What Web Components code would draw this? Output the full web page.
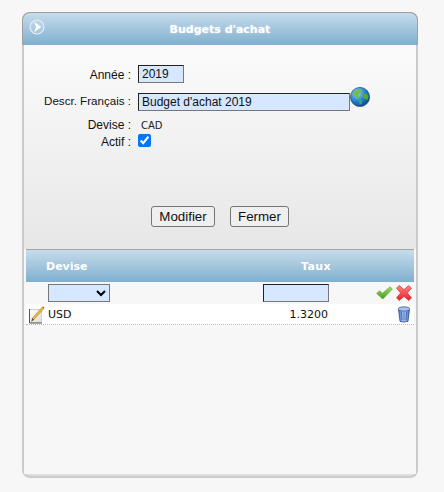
<!DOCTYPE html>
<html lang="fr">
<head>
<meta charset="utf-8">
<title>Budgets d'achat</title>
<style>
    html, body { margin: 0; padding: 0; background: #f7f7f7; }
    body { width: 444px; height: 492px; overflow: hidden; font-family: "Liberation Sans", Arial, sans-serif; }
</style>
</head>
<body>

<budget-panel heading="Budgets d'achat">
    <budget-form>
        <form-row label="Année :" top="20" shift="1"><text-box width="46" value="2019"></text-box></form-row>
        <form-row label="Descr. Français :" top="10" shift="-2" style="font-size:11.6px">
            <text-box width="212" value="Budget d'achat 2019"></text-box>
            <svg slot="after" width="22" height="22" viewBox="0 0 22 22">
                <defs>
                    <radialGradient id="sea" cx="0.35" cy="0.3" r="0.8">
                        <stop offset="0" stop-color="#9ad8f8"/>
                        <stop offset="0.55" stop-color="#1c7fd0"/>
                        <stop offset="1" stop-color="#0b3f80"/>
                    </radialGradient>
                </defs>
                <circle cx="11" cy="11" r="9.6" fill="url(#sea)"/>
                <path d="M5 5.5 9 3.5 13 4 12 7 9.5 8 10 11 8 13 6 10 3.5 9Z" fill="#74bd52"/>
                <path d="M13 9 17 7 19.6 10 18.5 14 16 13 14 12Z" fill="#58a63f"/>
                <path d="M10 14 13 14.5 12.5 18 10.5 18.5Z" fill="#5ca63f"/>
                <circle cx="11" cy="11" r="9.6" fill="none" stroke="#26435e" stroke-width=".7"/>
            </svg>
        </form-row>
        <form-row label="Devise :" top="7"><span style="font:10px 'DejaVu Sans',sans-serif;padding-left:3px;color:#222">CAD</span></form-row>
        <form-row label="Actif :" top="1" shift="2"><check-mark></check-mark></form-row>

        <button-bar>
            <push-button width="64">Modifier</push-button>
            <push-button width="59">Fermer</push-button>
        </button-bar>
    </budget-form>

    <rate-grid></rate-grid>
</budget-panel>

<script>
class BudgetPanel extends HTMLElement {
    constructor() {
        super();
        this.attachShadow({ mode: "open" });
    }

    connectedCallback() {
        this.shadowRoot.innerHTML = `
        <style>
            :host {
                display: block;
                box-sizing: border-box;
                width: 396px;
                height: 466px;
                margin: 12px 0 0 22px;
                border: 2px solid #cbcbcb;
                border-top: 0;
                border-radius: 8px;
                background: #dedede;
            }
            .Head {
                display: flex;
                align-items: center;
                justify-content: center;
                position: relative;
                height: 33px;
                margin: 0 -2px;
                box-sizing: border-box;
                border-top: 1px solid #a0a0a0;
                border-left: 1px solid #a0a0a0;
                border-right: 1px solid #a0a0a0;
                border-radius: 8px 8px 0 0;
                background: linear-gradient(#c6dceb, #80afcf);
                color: #fff;
                font: bold 11px "DejaVu Sans", sans-serif;
                text-shadow: 0 0 2px rgba(255,255,255,.5);
            }
            .Head svg { position: absolute; left: 6px; top: 6px; }
            .Body {
                height: 429px;
                box-sizing: border-box;
                background: #f7f7f7;
                display: flex;
                flex-direction: column;
            }
        </style>
        <div class="Head">
            <svg width="16" height="16" viewBox="0 0 16 16">
                <circle cx="8" cy="8" r="7" fill="rgba(255,255,255,.12)" stroke="#e8f1f7" stroke-width="1.1"/>
                <path d="M5 2.8 12.4 8 5 13.2 7.2 8Z" fill="#fff"/>
            </svg>
            <span>${this.getAttribute("heading")}</span>
        </div>
        <div class="Body"><slot></slot></div>
        `;
    }
}

class BudgetForm extends HTMLElement {
    constructor() {
        super();
        this.attachShadow({ mode: "open" });
    }

    connectedCallback() {
        this.shadowRoot.innerHTML = `
        <style>
            :host {
                display: block;
                height: 204px;
                flex: none;
                background: linear-gradient(#fbfbfb, #e7e7e7);
            }
        </style>
        <slot></slot>
        `;
    }
}

class FormRow extends HTMLElement {
    constructor() {
        super();
        this.attachShadow({ mode: "open" });
    }

    connectedCallback() {
        const top = this.getAttribute("top") || 0;
        const shift = this.getAttribute("shift") || 0;
        this.shadowRoot.innerHTML = `
        <style>
            :host {
                display: grid;
                grid-template-columns: 107px 1fr;
                column-gap: 7px;
                align-items: center;
                padding-top: ${top}px;
                font-size: 12px;
                color: #111;
            }
            .Label { text-align: right; white-space: nowrap; margin: ${shift}px 0 ${-shift}px; }
            .Value { display: flex; align-items: center; }
            ::slotted(svg) { margin: -2px 0 -2px -1.5px; transform: translateY(-5px); }
        </style>
        <div class="Label">${this.getAttribute("label")}</div>
        <div class="Value"><slot></slot><slot name="after"></slot></div>
        `;
    }
}

class TextBox extends HTMLElement {
    constructor() {
        super();
        this.attachShadow({ mode: "open" });
    }

    connectedCallback() {
        const width = this.getAttribute("width") || 60;
        this.shadowRoot.innerHTML = `
        <style>
            :host { display: inline-block; line-height: 0; }
            input {
                box-sizing: border-box;
                width: ${width}px;
                height: 18px;
                margin: 0;
                padding: 0 3px;
                border: 1px solid;
                border-color: #222 #777 #777 #222;
                border-radius: 0;
                background: #d5e8ff;
                color: #111;
                font: 12px "Liberation Sans", Arial, sans-serif;
                outline: none;
            }
        </style>
        <input type="text" value="${this.getAttribute("value") || ""}">
        `;
    }
}

class CheckMark extends HTMLElement {
    constructor() {
        super();
        this.attachShadow({ mode: "open" });
    }

    connectedCallback() {
        this.shadowRoot.innerHTML = `
        <style>
            :host { display: inline-block; line-height: 0; }
            input { width: 13px; height: 13px; margin: 0; accent-color: #0075ff; }
        </style>
        <input type="checkbox" checked>
        `;
    }
}

class ButtonBar extends HTMLElement {
    constructor() {
        super();
        this.attachShadow({ mode: "open" });
    }

    connectedCallback() {
        this.shadowRoot.innerHTML = `
        <style>
            :host {
                display: flex;
                gap: 15px;
                padding: 59px 0 0 127px;
            }
        </style>
        <slot></slot>
        `;
    }
}

class PushButton extends HTMLElement {
    constructor() {
        super();
        this.attachShadow({ mode: "open" });
    }

    connectedCallback() {
        this.shadowRoot.innerHTML = `
        <style>
            :host { display: block; }
            button {
                box-sizing: border-box;
                width: ${this.getAttribute("width")}px;
                height: 21px;
                margin: 0;
                padding: 0;
                border: 1px solid #767676;
                border-radius: 3px;
                background: #efefef;
                color: #111;
                font: 13.33px "Liberation Sans", Arial, sans-serif;
            }
        </style>
        <button type="button"><slot></slot></button>
        `;
    }
}

class RateGrid extends HTMLElement {
    constructor() {
        super();
        this.attachShadow({ mode: "open" });
    }

    connectedCallback() {
        this.shadowRoot.innerHTML = `
        <style>
            :host {
                display: block;
                flex: 1;
                margin: 0 2px;
                background: #f7f7f7;
                font: 11px "DejaVu Sans", sans-serif;
                color: #111;
            }
            .Row {
                display: grid;
                grid-template-columns: 22px 215px 66px 1fr;
                align-items: center;
            }
            .Titles {
                height: 33px;
                box-sizing: border-box;
                border-top: 1px solid #a3a3a3;
                background: linear-gradient(#c6dceb, #80afcf);
                color: #fff;
                font-weight: bold;
            }
            .Titles .Left { grid-column: 2; margin-left: -2px; }
            .Titles .Right { grid-column: 3; text-align: right; margin-right: -2px; letter-spacing: .4px; }
            .Filter { height: 22px; background: #f7f7f7; }
            .Data {
                height: 21px;
                box-sizing: border-box;
                background: #fff;
                border-bottom: 1px dotted #bbb;
            }
            .Rate { text-align: right; padding-right: 1px; }
            .Tools { display: flex; justify-content: flex-end; align-items: center; gap: 3px; padding-right: 2px; }
            select {
                display: block;
                box-sizing: border-box;
                width: 62px;
                height: 18px;
                margin: 0;
                border: 1px solid #777;
                border-radius: 0;
                background-color: #d5e8ff;
                font: 11px "DejaVu Sans", sans-serif;
            }
            input {
                display: block;
                box-sizing: border-box;
                width: 66px;
                height: 18px;
                margin: 0;
                border: 1px solid;
                border-color: #222 #777 #777 #222;
                border-radius: 0;
                background: #d5e8ff;
                outline: none;
            }
            svg { display: block; }
        </style>
        <div class="Row Titles">
            <span class="Left">Devise</span>
            <span class="Right">Taux</span>
        </div>
        <div class="Row Filter">
            <span></span>
            <div><select></select></div>
            <div><input type="text"></div>
            <div class="Tools">
                <svg width="17" height="14" viewBox="0 0 17 14">
                    <defs><linearGradient id="ok" x1="0" y1="0" x2="0" y2="1">
                        <stop offset="0" stop-color="#a2e06a"/><stop offset="1" stop-color="#3c9e14"/>
                    </linearGradient></defs>
                    <path d="M.7 7.6 3.4 4.8 6.6 7.2 14 .8 16.4 3 6.8 13Z" fill="url(#ok)" stroke="#5c9448" stroke-width=".6"/>
                </svg>
                <svg width="16" height="16" viewBox="0 0 16 16">
                    <defs><linearGradient id="no" x1="0" y1="0" x2="0" y2="1">
                        <stop offset="0" stop-color="#ff8488"/><stop offset="1" stop-color="#f01c22"/>
                    </linearGradient></defs>
                    <path d="M.5 3.2 3.2.5 8 4.6 12.8.5 15.5 3.2 11.4 8 15.5 12.8 12.8 15.5 8 11.4 3.2 15.5.5 12.8 4.6 8Z" fill="url(#no)" stroke="#b83c40" stroke-width=".7"/>
                </svg>
            </div>
        </div>
        <div class="Row Data">
            <svg width="18" height="19" viewBox="0 0 18 19" style="margin-left:2px">
                <defs><linearGradient id="page" x1="0" y1="0" x2="1" y2="1">
                    <stop offset="0" stop-color="#ffffff"/><stop offset="1" stop-color="#dcdcdc"/>
                </linearGradient></defs>
                <rect x="1.5" y="4.5" width="12" height="13" fill="url(#page)" stroke="#c8c8c8" stroke-width=".8"/>
                <path d="M1.5 4V18H14" fill="none" stroke="#555" stroke-width="1"/>
                <path d="M3.6 16.2 4.4 13.2 14.2 2.2 15.8 3.6 6 14.6Z" fill="#f3bd3a" stroke="#8a6418" stroke-width=".5"/>
                <path d="M3.6 16.2 4.4 13.2 6 14.6Z" fill="#5a4426"/>
                <path d="M14.2 2.2 15 1.3 16.6 2.7 15.8 3.6Z" fill="#d2503a"/>
            </svg>
            <span>USD</span>
            <span class="Rate">1.3200</span>
            <div class="Tools" style="padding-right:3px">
                <svg width="14" height="17" viewBox="0 0 14 17">
                    <defs><linearGradient id="bin" x1="0" y1="0" x2="1" y2="0">
                        <stop offset="0" stop-color="#4f78d0"/><stop offset=".5" stop-color="#b4ccf4"/><stop offset="1" stop-color="#4a70c4"/>
                    </linearGradient></defs>
                    <path d="M1.6 4 3 15.4Q7 16.8 11 15.4L12.4 4Z" fill="url(#bin)" stroke="#33508e" stroke-width=".8"/>
                    <ellipse cx="7" cy="3" rx="5.8" ry="2.2" fill="#a9c2ea" stroke="#3f5c9c" stroke-width=".8"/>
                    <path d="M4.4 6 5 14M7 6V14.4M9.6 6 9 14" stroke="#3459a8" stroke-width=".7" fill="none"/>
                </svg>
            </div>
        </div>
        `;
    }
}

customElements.define("budget-panel", BudgetPanel);
customElements.define("budget-form", BudgetForm);
customElements.define("form-row", FormRow);
customElements.define("text-box", TextBox);
customElements.define("check-mark", CheckMark);
customElements.define("button-bar", ButtonBar);
customElements.define("push-button", PushButton);
customElements.define("rate-grid", RateGrid);
</script>
</body>
</html>
